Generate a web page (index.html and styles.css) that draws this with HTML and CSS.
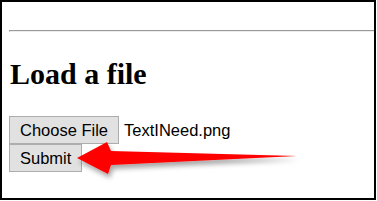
FILE: index.html
```html
<!DOCTYPE html>
<html>
<head>
  <title>Load a file</title>
  <meta charset="UTF-8">
  <link rel="stylesheet" href="styles.css">
</head>
<body>
  <div class="frame">
    <hr class="rule">
    <h2 class="title">Load a file</h2>
    <form class="upload-form">
      <div class="file-row">
        <button type="button" class="btn">Choose File</button>
        <span class="file-name">TextINeed.png</span>
      </div>
      <div class="submit-row">
        <button type="button" class="btn">Submit</button>
      </div>
    </form>
    <!-- annotation arrow pointing at Submit -->
    <svg class="arrow" width="377" height="201" viewBox="0 0 377 201">
      <defs>
        <filter id="shadow" x="-10%" y="-50%" width="120%" height="200%">
          <feDropShadow dx="2" dy="4" stdDeviation="2.5" flood-color="#000" flood-opacity="0.35"/>
        </filter>
      </defs>
      <polygon points="77,158 107,142 111,151 297,156 111,165 108,174" fill="#ff0000" filter="url(#shadow)"/>
    </svg>
  </div>
</body>
</html>
```

FILE: styles.css
```css
body {
  margin: 0;
  background: #fff;
}
.frame {
  position: relative;
  box-sizing: border-box;
  width: 376px;
  height: 200px;
  border: 2px solid #000;
  overflow: hidden;
  background: #fff;
}
.rule {
  height: 0;
  margin: 28px 0 0 7px;
  border: none;
  border-top: 1px solid #9a9a9a;
  border-left: 1px solid #9a9a9a;
  border-bottom: 1px solid #ededed;
}
.title {
  margin: 25px 0 0 8px;
  font-family: "Liberation Serif", "Times New Roman", serif;
  font-size: 30px;
  font-weight: bold;
  line-height: 34px;
  color: #000;
}
.upload-form {
  margin: 25px 0 0 7px;
}
.file-row {
  display: flex;
  align-items: center;
  gap: 5px;
}
.submit-row {
  display: flex;
}
.btn {
  box-sizing: border-box;
  height: 28px;
  padding: 0 10px;
  margin: 0;
  border: 1px solid #adadad;
  border-radius: 0;
  background-color: #e1e1e1;
  font-family: "Liberation Sans", Arial, sans-serif;
  font-size: 16.5px;
  color: #000;
}
.file-name {
  font-family: "Liberation Sans", Arial, sans-serif;
  font-size: 16.5px;
  color: #000;
}
.arrow {
  position: absolute;
  left: -2px;
  top: -2px;
  pointer-events: none;
}
```
